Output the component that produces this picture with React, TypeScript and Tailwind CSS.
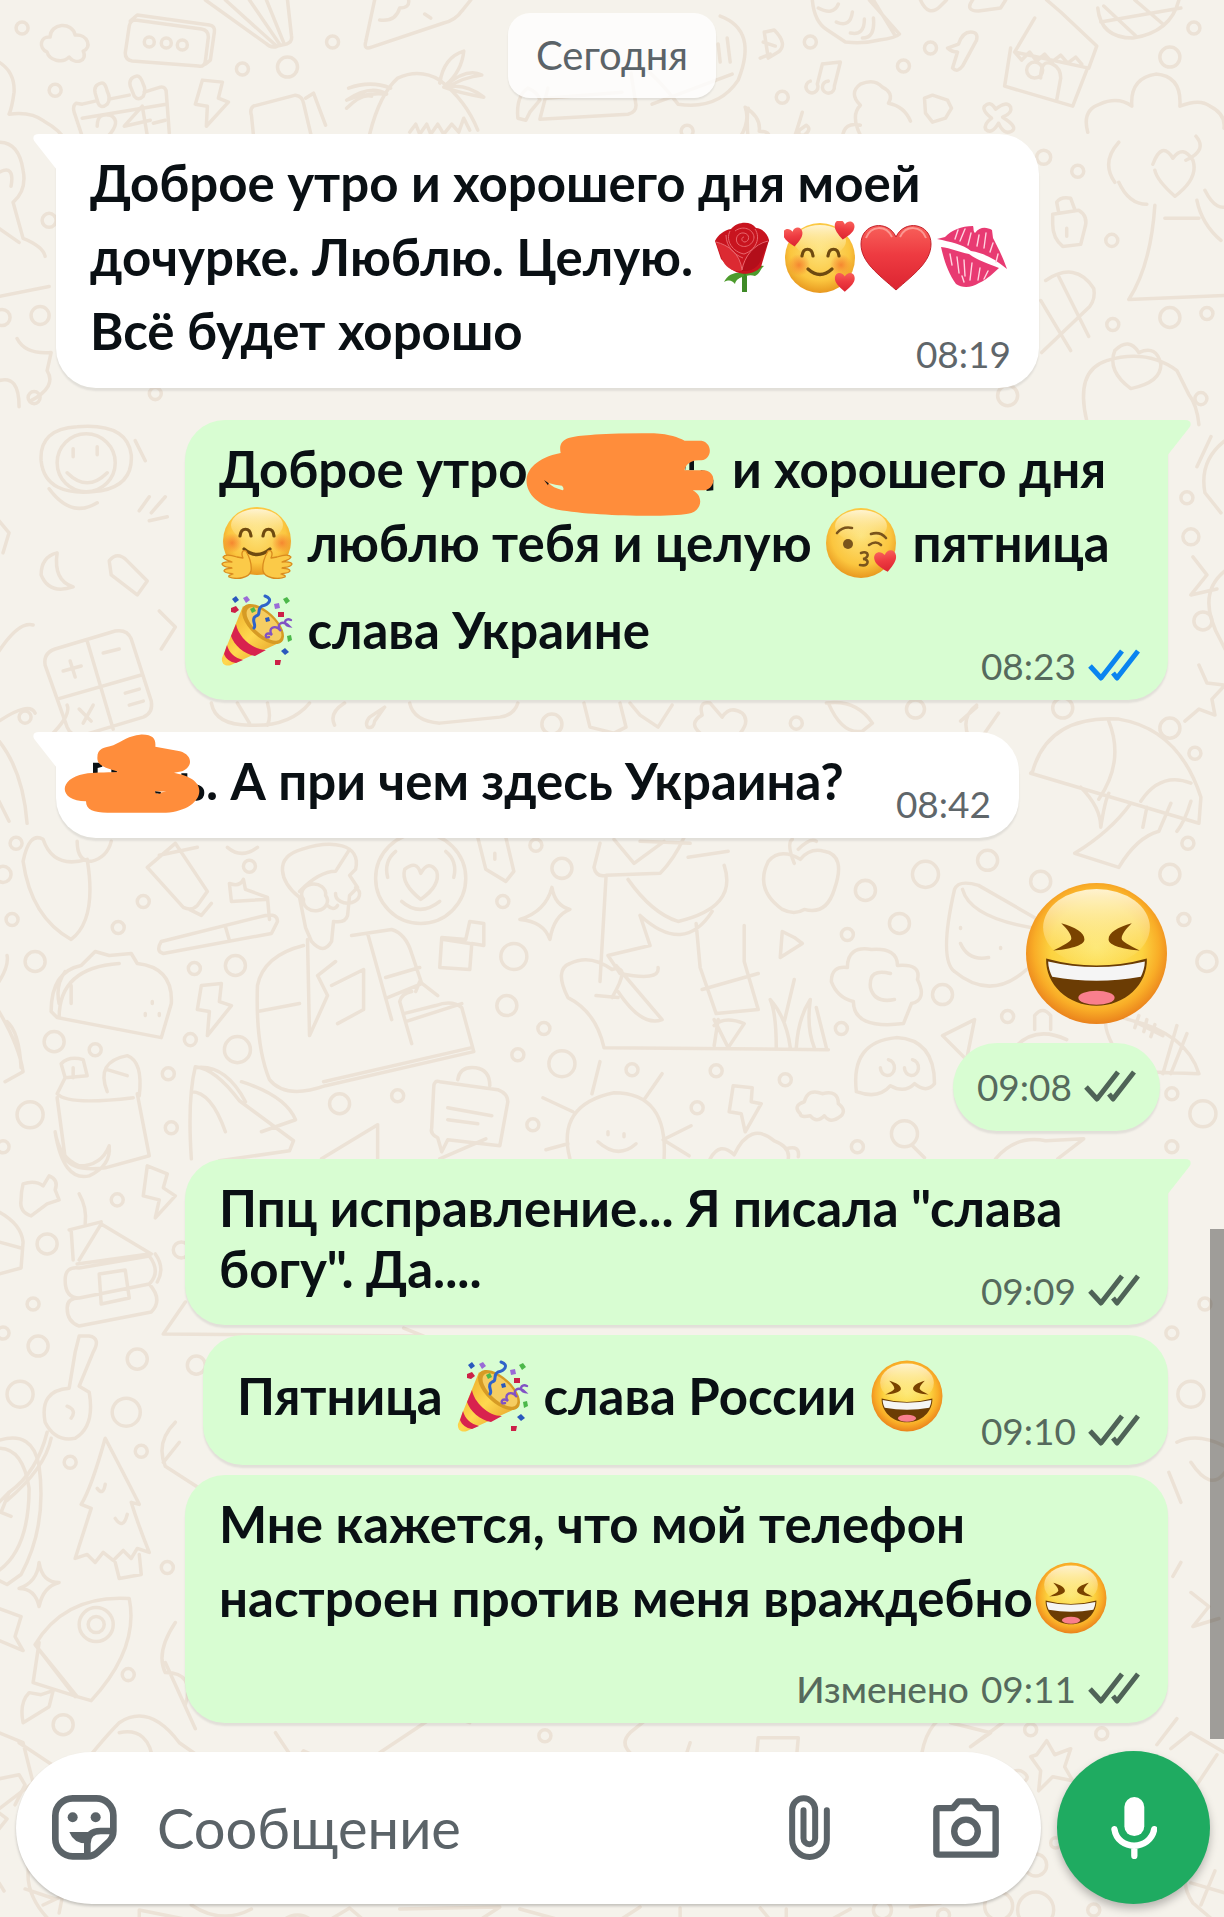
import type { ReactNode } from 'react'

type Message = {
  time: string
  body: ReactNode
  status?: 'read' | 'delivered'
  edited?: boolean
  tail?: boolean
  className: string
}

const doodleCircles = [
  [23, 28, 6], [333, 42, 6], [243, 69, 6], [288, 67, 10], [56, 90, 6], [810, 42, 6],
  [930, 48, 6], [903, 66, 6], [782, 97, 6], [1193, 28, 6], [1169, 57, 10], [1043, 157, 7],
  [1077, 171, 6], [1111, 240, 6], [1112, 324, 6], [1169, 317, 10], [1206, 313, 6],
  [41, 315, 9], [3, 317, 8], [50, 220, 7], [35, 397, 6], [156, 393, 6], [1007, 395, 10],
  [1200, 398, 6], [687, 131, 6], [26, 716, 6], [552, 723, 10], [796, 722, 6], [915, 708, 9],
  [1062, 707, 10], [1169, 727, 10], [1194, 752, 6], [4, 873, 8], [17, 842, 6], [250, 865, 6],
  [144, 900, 6], [13, 918, 6], [119, 926, 6], [36, 960, 10], [195, 967, 6], [236, 964, 10],
  [503, 900, 6], [562, 867, 10], [536, 844, 6], [514, 955, 13], [507, 1004, 10],
  [544, 1027, 6], [865, 889, 10], [899, 922, 10], [847, 933, 6], [925, 873, 13],
  [987, 859, 10], [1040, 880, 10], [1169, 873, 10], [1187, 842, 6], [1183, 918, 6],
  [1206, 960, 10], [942, 993, 10], [1007, 1015, 6], [841, 1027, 6], [191, 1038, 6],
  [238, 1048, 13], [55, 1040, 10], [96, 1048, 6], [169, 1072, 6], [172, 1126, 6],
  [340, 1102, 10], [398, 1094, 6], [518, 1053, 6], [562, 1062, 13], [632, 1068, 6],
  [716, 1069, 6], [785, 1078, 6], [697, 1106, 6], [533, 1123, 6], [31, 1113, 13],
  [857, 1145, 6], [904, 1132, 13], [1171, 1092, 6], [1202, 1112, 13], [1171, 1145, 6],
  [4, 1145, 6], [48, 1242, 10], [118, 1198, 6], [34, 1302, 6], [4, 1331, 6], [39, 1344, 10],
  [138, 1357, 10], [21, 1392, 13], [127, 1410, 14], [71, 1460, 6], [142, 1449, 6],
  [197, 1363, 9], [1204, 1302, 6], [1171, 1331, 6], [1190, 1392, 13], [182, 1248, 8],
  [168, 1565, 6], [129, 1672, 6], [64, 1722, 10], [545, 1733, 6], [1030, 1727, 6],
  [1101, 1731, 6], [1035, 1862, 11], [998, 1903, 14], [1035, 1907, 18], [1093, 1907, 6],
  [943, 1912, 6], [882, 1907, 9], [1055, 1840, 5], [150, 42, 5], [167, 43, 5], [183, 45, 5],
  [421, 877, 45], [1190, 536, 8], [1186, 497, 6], [1202, 620, 9], [87, 462, 29],
  [97, 1622, 17], [97, 1622, 8], [1034, 70, 8],
]

const doodlePaths = [
  // top strip
  'M48 52c-9-4-7-16 3-15 0-14 22-16 25-2 13-1 17 13 8 16 5 10-8 14-14 6-7 7-20 3-22-5z',
  'M136 20l66 9q7 1 7 8l-3 24q-1 6-7 5l-66-5q-7-1-7-8l4-27q1-6 6-6zM131 21l7-6 72 10q6 1 5 7l-4 28-5 4',
  'M206 0l60 43q6 6 12 3l9-2q6-2 5-8L288 0M226 0l50 45M250 0l30 44M267 0l17 42',
  'M375 0l-9 42q-2 8 6 5l72-24q12-3 18-12l9-11M380 20q16 2 20-12 10 0 9-8M425 14l6 4',
  'M83 104l-6-1q-4 3-2 9l10 30M83 104l13-3M110 99l20-4M145 92l16-5q6-1 6 6l3 40M83 118l84-14',
  'M102 83q-8 2-6 10l3 10q3 6 9 1 4-5 0-13-2-9-6-8zM137 76q-8 2-6 10l4 10q4 5 9 0 3-6 0-12-3-9-7-8z',
  'M98 126q0-14 13-11 12 6-3 22l-9 9 20-6M143 106l-18 20 26-6M143 106l6 35M154 123l12-3',
  'M203 80l-7 24 12 2-1 20 22-24-10-4 4-16zM254 106l42-11q7 1 8 8l8 34M254 106q-4 3-2 9l3 30',
  'M306 98l8-5 12 32M0 62q16 10 15 30-2 15-5 22 22-3 35 7 16 9 22 20',
  'M370 134q10-40 28-56 22-10 42 2 26 20 38 50M347 100q24-16 40-6-20-2-40 6zM349 88q22-8 42 0M440 83q4-26 24-32-2 20-18 34 22-18 36-10-18 2-34 12 18-4 36 10-24-4-40-10',
  'M372 96q-10-3-25 12M410 132l6-8 4 10 7-10 4 10 7-10 6 10 8-10 7 8 5-14 6 12',
  'M518 118q-2-22 10-30 10 4 12 12l-10 12-4 8zM548 88l-8 31 88-5q8-2 8-9l-5-32M546 98l76-6',
  'M640 64q18 14 38 40 40 6 60-24 20-50-18-64M718 44l2 18M727 38l3 24M652 104l80-30',
  'M812 0q2 22 15 30l18 12q18 2 34-2 16-2 20-6l-30-34M818 8q15 8 20-4M836 22q14 6 16-10M850 33q14 3 14-14M862 38q13 0 11-20M873 0l22 36',
  'M765 32l9-2q14 14 4 22l-10 6-4-26zM760 58l10-4M763 42l12 4',
  'M822 64l18-2-6 24M822 64l-5 20M834 86a6 6 0 1 1-6-5M817 84a6 6 0 1 1-7-3',
  'M958 44q4-12 12-12 8 0 6 8l-14 26q-5 7-10 2l5-16q-6 0-10-4z',
  'M924 98l8-3 15 5 4 8-6 10-13 4-7-9zM984 106q6-6 11 3 11-9 15-2 2 6-8 10 16 10 9 14-8 4-13-8-7 12-13 6-2-5 6-11-10-8-7-12z',
  'M860 135q-10-20 0-30-12-12 0-21 14-6 22 3 12 6 6 16 16 3 22 18M842 137q2-16 18-12M802 112q-6 20-8 25M799 130q-2 6 5 5 8-6 2-10z',
  'M740 137q10-16 5-30 16 10 14 24 10 0 10 6M748 140q-2-22 0-32',
  'M920 0q8 18 20 6l6-6M972 0q-8 11 6 11l22-3 5-8',
  'M1034 18l-20 34 74 16 8-22-36-34-14-12M1010 48l-6 38 68 20 14-36M1040 78q0-20 12-14 8 4 8 14l-4 22M1014 52l7 8 8-8 7 9 8-7 7 8 9-7 7 8 8-6 6 7',
  'M1097 8q3 30 35 30 38-6 46-38M1103 6l32 30M1134 0l28 24M1100 22l80-14',
  'M1087 132q-6-22 12-28 18-8 32 2-2-28 24-32 26 2 24 32 20-8 30 0 16 8 14 22M1118 142q-18 20-4 40M1185 160q22-10 10-24M1118 182q10 22 28 22M1204 190q12 24 26 14M1152 164q9-24 20-6 10-14 20 2 6 18-18 36-18-16-20-26',
  'M1154 205q-4 60-26 94l96-4M1164 218h34M1196 200q5 24 24 40',
  // strips beside the first bubbles
  'M1052 214l26-4q10 6 6 18l-4 16-18 2q-10-8-10-22zM1058 212l-2-10q4-6 14-4l4 11M1066 228v8',
  'M1045 280q30-20 48 8 2 10-4 18l-48 46M1058 276l30 60M1040 300l30 50',
  'M1086 420q-12-50 20-60 40-12 70 10l12 24q8 10 10 30M1130 388q-24-18-16-38 14-14 24 2 18-8 22 12 0 18-30 24z',
  'M0 142q20 0 24 28 4 20-10 32l10 36q20 8 22 18M0 172q16-8 12 14M0 228l20 14M0 296l50-10M18 338q8 16 34 14l-4 18q10 16-16 30M0 380q20-6 20 26',
  'M1210 436l-14 30M1224 440q-26 20-20 52l16 20M1192 556l14 18-16 20 26-6M1224 570q-30 24-4 70l4 8M1198 664l8 18 18 2-13 14 3 16-16-6-14 12',
  'M42 460q-2-32 36-34 50-4 54 28 2 30-30 36-56 8-60-30zM68 472q20 20 40 0M74 448v8M98 446v8M50 488q22 30 48 14',
  'M140 510l10-14M152 512l14-16M136 440l10 20',
  'M58 552q-16 4-16 22 8 20 32 12-20-6-16-34zM110 560q8-10 18 0l20 20-10 14-26-20z',
  'M46 664q-2-12 10-16l60-18q12-2 16 8l20 62q2 12-8 16l-60 18q-12 2-16-8zM58 698l84-24M88 640l26 88M64 670l18-5M71 660l5 16M104 652l16-4M80 708l12 12M94 704l-10 18M126 692l14-4M130 704l14-4',
  'M0 650q20-30 34-26M0 720q30-20 36-8M150 520l18-4M0 520l10 12-6 20M160 610l16 16-14 22',
  // row under the second bubble
  'M212 702q4 22 38 22 40 2 60-22M238 702l12 20M268 702q4 14 0 22M335 724q-6-12 10-22M370 716q-5 6-2 10 6 2 7-6l10-14zM410 702q4 18 30 20l60-6q14-2 18-14',
  'M584 702l6 24 24 6 12-6-6-24M630 702l10 12 18 12 14-22M700 732q-12-10 2-18-4-14 8-12l12 14q8-12 20-4 8 8-2 20M826 702q30-4 46 20l-10 8q-20 4-34-28M968 736q-8-20 8-32M984 732l14-20M960 720l16-14',
  // right of the short bubble
  'M1032 770q16-56 86-52 60 10 82 78l-2 26-168-50zM1108 720q16 40-10 78M1140 800q20-30 50-18M1080 786q20 20 20 40 4-26 8-34M1146 806l-4 20M1130 802q-20 28-56 50l44 14q18-30 40-36l12-28M1190 800q-6 20-14 30',
  'M0 740q24 30 28 82M0 800l10 20M52 734q20-20 16-30M24 860q6-30 20-22 10 30 44 20 10 60-16 80-40-22-48-78zM78 840q0 20 14 20 16-4 20-20',
  'M0 980q10-16 8-26M0 1010q20 34 24 60l-18 10M8 1020q12 10 14 46',
  'M176 842l-28 24 36 40q8 4 14-2l10-14zM160 854l38-8M190 908l12 6 10-12M228 846q14 12 30 0',
  'M232 900l-2-18q10 4 14-4l2 10 22 8 2 22M232 900l34-2M162 940l104-26q12-2 12 6l-6 12-108 20q-8-2-2-12zM226 925l4 14',
  'M300 896c-20-16-26-40 2-48 30-10 60-6 54 20l-6 6 8 12-8 8-2 20q-2 8-14 6l-2 20q-8 14-20 0l-6-14-6-30zM300 890q20-20 36-20l14-22M304 898a12 10 0 1 0 22-4 12 10 0 1 0-22 4zM336 892a12 9 0 1 0 20-6M328 904q6 6 10 0',
  'M304 944q-40 10-46 40-2 60 12 94 16 20 56 6l148-34-12-44q-10-8-26-2l-32 8M308 938l2 96 18-40-10-20 18-14M352 934l40-6q14 4 20 24l10 30-34 14M368 932l24 86M258 1010l42-8M324 1080l148-34M406 1020l56-18M412 1042l-12-42q2-8 12-10M416 990l4-10 18 14M332 984l32-16v40l-26 14M386 976l34-10',
  'M396 850q-12 10-8 26M446 850q12 10 8 26M402 900q18 16 38 0M421 898q-20-16-16-30 12-10 16 4 8-14 16-2 4 14-16 28z',
  'M478 836l8 32 20 12 8-10-8-34M495 852v6M484 922l-14-2-4 18-24-2-2 30 30 2 2-26 12 2zM444 938l26 4',
  'M552 886q3 18 18 22-16 6-20 30-6-18-30-20 26-8 32-32z',
  'M600 842l-6 24q2 10 12 8l54-2q14-14 24-36M606 876l-6 104M628 878q24 34 50 42 60-14 46-56M688 856l40-6M640 914l10 30-42 10 12 18q40 8 38-6M640 914q44 40 72-4M696 922l4 44 16 46 42-4-14-48V924M702 988l56-16M616 964l46 54q-20 8-44-28M596 994l22 2M604 1046q-8-36-36-50-14-28 2-34 20-10 42 6 20-6 0 28M714 1044l4-26M714 1018l14 28 16-24q-20-8-30 2M604 1046l224 2M776 1046q0-34-6-48 16 18 20 48M784 1020l10-42M796 1046q2-30 14-48-4 28 4 48M826 1046l-10-40',
  'M794 862q-8-20-2-24M800 858q-20-12-32 2-14 28 14 48 12 6 22 0 22 6 30-20 12-34-10-38-14-4-24 8zM798 848q12-12 18-8M614 838l20 24 30-22M640 840l50 2',
  'M954 888q4-10 24-4l66 38M954 888q-16 70 0 82 36 30 72-2M962 888q8 30 80 40M960 942q8 18 28 14M1000 946v1M960 926v1',
  'M782 930l-2 26 22-14-8-6zM831 980q0-16 16-14 0-22 24-18 26-2 26 16 24-2 20 14 10 20-6 24l-8 20q-50 6-50-22-16-4-22-20zM890 972q-22-6-20 14 4 16 24 12',
  'M52 1010q0-40 30-46l14-14 14 4 22-2 6 10q36 4 34 40l-10 34-104-20zM60 1016q0-50 60-54M72 984v18M153 1000v2M146 1012v2M160 1012v2M66 970q-10 14-6 32',
  'M202 984l-4 24 12 2-2 24 24-30-12-4 2-18z',
  'M856 1090q-6-50 40-54 38 2 38 46-8 10-20 0-10 10-24 2-12 14-34 6zM880 1066a7 8 0 1 0 8-8M904 1066a7 8 0 1 0 8-8',
  'M1112 1044q-20-40 16-26 58 14 70 54l-56-2M1176 1024l-14 48M1186 1032l-16 40M1134 1020l28 14M1138 1014l-4 12M1146 1018l-3 12M1154 1023l-4 12M942 1034l32-16-8 40zM1034 1028v-14q8-10 16 0v14M1016 1044q20-20 50-6',
  'M570 1157q-14-54 44-66 54 0 50 66M543 1096l30 14M600 1060l-8 32M662 1072l-18 26M691 1124l-28 14 26 16M546 1148l22-6M608 1130v3M624 1132v3M598 1140q20 18 38 2',
  'M458 1078q2-14 18-12 14 2 14 18M440 1080l58 8q10 4 10 12l-8 44-52-6-6 12-4-14q-8-4-6-10l2-40q0-8 6-6zM448 1106l44 8M448 1118l30 4',
  'M733 1084l-4 26 12 2 4 18 16-28-10-2 1-14zM800 1112q-8-8 4-12 4-14 18-8 16-4 16 10 10 8 0 14-8 6-14-2-8 8-14 0-10 2-10-2z',
  'M66 1076l-4-14q8-8 22-4l4 16zM66 1076l-8 16q10 12 76 4M58 1096l8 60q8 14 40 10l44-12-12-62M108 1090q-12-30 20-36 16 6 12 40M56 1130q8 50 34 44 22-10 20-30-8 20-30 20-20-8-24-34M74 1066v10M108 1068l20 6',
  'M192 1157q-4-60 4-92 20 2 44 34l54 40-4 10-70 10M196 1066q30-4 50 34M262 1130l34-12q-10-24-54-38M192 1090q20 0 34 40M322 1157l56-34v34M710 1157q10-18 24-4 16-34 40-14 16 6 14 18M786 1147q14-4 12 8M912 1144l12 12M995 1157q20-24 50-18l38-2-26 20M440 1157l46-20',
  // left strip by the lower bubbles
  'M24 1182q12-4 20 2l6-10q10 4 6 14l4 10-12 4-16 12q-12-4-10-16 0-8 2-16zM148 1164l-4 30 16 4-4 18 20-22-12-8 4-14zM80 1192q8 14 6 30',
  'M0 1210q22 12 24 30l-2 26-22 6M0 1240l22 6M70 1228l32-8M74 1258l-2-30M80 1258l22-36 50 30M78 1262l72-10M66 1278q0-14 14-12l70-12q12 16 0 28l-70 14q-14 0-14-18zM68 1306q0-10 12-10l70-14q14 16 2 28l-72 14q-12-4-12-18zM100 1272l26-4 4 28-28 6zM156 1252q10 14 2 28',
  'M186 1300l-22 32 260 2-20-8M80 1334l-4 16-6 36q-30 2-24 34 10 20 30 16 20-12 14-46l-10-6 14-34q8-14-4-16zM68 1404q10 4 4 12M48 1430q-10 40-38 60M52 1436q-6 30-44 62',
  'M0 1438q34-10 40 26 8 60-18 108l-14 10-8-4M0 1446q24 0 30 40 0 60-30 82M0 1500l10-10-8 20 10 4',
  'M106 1436q-14 50-24 66l10 4-16 50 12-4 8 8 8-10 10 8 10-10 8 8 6-10 12 4q-12-30-18-50l8 2q-10-20-34-66zM98 1486q6 8 8-4M116 1516q8 12 12-4M116 1560l4 16 22-4-2-20M176 1420q-20 20-10 44l34 22M180 1440l-16 20',
  'M40 1560q3 20 20 20-16 4-20 24-4-18-20-18 18-6 20-26zM1176 1440q20-10 48 4M1168 1470l12 30M1190 1460q20 30 34 10M1180 1560l-8 14M1190 1590l18 14-16 20 26-8',
  'M36 1642q30-50 94-46 10 50-38 102l-14-4zM40 1640l-6 40 44 14M36 1642l40 52M30 1690q-10 10-6 30l26-16 4-16-12 4zM0 1606l22 8-6 20 8 14-24-10M176 1620q-20 30-10 50 30 0 20 32M166 1660l30 66',
  'M0 1730l24 10 10 40-34 26M20 1740l60 40M70 1780q30-40 50-60 30-20 60 20l20 14M120 1730q30-6 34 30M276 1730l20 30 8-12 22 10M380 1750l60-40 30 10M630 1750q-10-10 0-20l20-16M690 1740l-6 18M758 1735h40l-2 22h-40z',
  'M920 1760q4-40 30-50M950 1720l40 10-20 14 40-30M1036 1752l10-14 8 14 16-6-6 18 8 14-20-4-14 14 2-20-10-14zM1156 1742l20-26M1170 1746l20-16 34 20M1196 1782l20-30',
  // around the composer
  'M0 1776l20-4 6 10-10 20M0 1810l8 6-8 10M0 1880l5 8M30 1860q-6 30 20 57M26 1886l30 10M66 1880l-6 30M44 1902l30-14M140 1917v-10l50 10M192 1902q30 20 60 4M284 1917q14-10 28 0M330 1917l20-12 14 12M400 1906l100-2-20 13M520 1906l40 11M640 1904l-20 13M680 1905v12M760 1905l10 12M786 1906v11M850 1906l-20 11M910 1904l30-4',
  'M1202 1840q-30 30-10 60l20 17M1214 1868l-14 34M1190 1880l34 10M1012 1780q-4-14 8-12 12 6 2 12l-10 8',
]

const Doodles = () => (
  <svg
    aria-hidden="true"
    className="absolute inset-0 size-full"
    viewBox="0 0 1224 1917"
    preserveAspectRatio="xMidYMin slice"
    fill="none"
    stroke="#ece2d6"
    strokeWidth="3.5"
    strokeLinecap="round"
    strokeLinejoin="round"
  >
    {doodleCircles.map(([cx, cy, r], index) => (
      <circle key={index} cx={cx} cy={cy} r={r} />
    ))}
    {doodlePaths.map((d, index) => (
      <path key={index} d={d} />
    ))}
  </svg>
)

// Gradients shared by every emoji on the page
const EmojiPaint = () => (
  <svg aria-hidden="true" className="absolute size-0">
    <defs>
      <radialGradient id="face" cx="0.5" cy="0.46" r="0.54">
        <stop offset="0" stopColor="#fde66a" />
        <stop offset="0.6" stopColor="#fcd340" />
        <stop offset="0.82" stopColor="#f9ad27" />
        <stop offset="1" stopColor="#ea821c" />
      </radialGradient>
      <radialGradient id="soft" cx="0.5" cy="0.4" r="0.6">
        <stop offset="0" stopColor="#fde27a" />
        <stop offset="0.7" stopColor="#fbc63f" />
        <stop offset="1" stopColor="#e8981f" />
      </radialGradient>
      <linearGradient id="shine" x1="0" y1="0" x2="0" y2="1">
        <stop offset="0" stopColor="#fff6d8" stopOpacity="0.95" />
        <stop offset="1" stopColor="#fff0a0" stopOpacity="0" />
      </linearGradient>
      <radialGradient id="blush">
        <stop offset="0" stopColor="#f4772b" stopOpacity="0.8" />
        <stop offset="1" stopColor="#f4772b" stopOpacity="0" />
      </radialGradient>
      <linearGradient id="heart" x1="0" y1="0" x2="0" y2="1">
        <stop offset="0" stopColor="#f8605a" />
        <stop offset="0.45" stopColor="#ee3b41" />
        <stop offset="1" stopColor="#dc2431" />
      </linearGradient>
      <linearGradient id="cone" x1="0" y1="0" x2="1" y2="1">
        <stop offset="0" stopColor="#e9a21f" />
        <stop offset="0.5" stopColor="#ffd84f" />
        <stop offset="1" stopColor="#dd8f1b" />
      </linearGradient>
    </defs>
  </svg>
)

const emojiClass = 'mx-0.5 inline-block size-18 align-[-17px]'
const HEART = 'M12 22C5 16 1 12 1 7c0-7 8-8 11-2 3-6 11-5 11 2 0 5-4 9-11 15z'

const Laughing = ({ className = emojiClass }: { className?: string }) => (
  <svg role="img" aria-label="😆" className={className} viewBox="-1 -1 142 142">
    <circle cx="70" cy="70" r="70" fill="url(#face)" />
    <ellipse cx="70" cy="44" rx="53" ry="38" fill="url(#shine)" />
    <g fill="#7a4300">
      <path d="M35 40c14 4 23 9 23 16 0 6-16 10-31 11 10-5 18-9 18-12 0-4-4-9-10-15z" />
      <path d="M105 40c-14 4-23 9-23 16 0 6 16 10 31 11-10-5-18-9-18-12 0-4 4-9 10-15z" />
    </g>
    <path d="M20 75q50 14 100 0c1 26-22 47-50 47S19 101 20 75z" fill="#6b3c04" />
    <path d="M22 78q48 11 96 0c0 6-2 11-4 15q-44 8-88 0c-2-4-4-9-4-15z" fill="#f5f5f5" />
    <ellipse cx="70" cy="114" rx="18" ry="7" fill="#f97f8d" />
  </svg>
)

const Rose = () => (
  <svg role="img" aria-label="🌹" className={emojiClass} viewBox="0 0 72 72">
    <path d="M34 48h5v23h-5z" fill="#3f8a27" />
    <path d="M35 52c-8-1-15 1-19 9 6-3 8-1 11 2 1-5 5-6 9-8zM38 52c4-5 10-9 18-7-4 3-4 8-9 10-3-1-6-1-9 0z" fill="#4d9b2d" />
    <path d="M23 8C30 0 43 0 48 7c6 0 12 6 13 12l-8 27c-8 9-24 9-32 0L13 38 7 20C10 14 16 9 23 8z" fill="#c8141f" />
    <path d="M8 21c10 3 24 9 26 29-10 1-17-4-20-12z" fill="#dc2a32" />
    <path d="M61 19c-12 2-22 12-27 31 12 1 18-6 20-14z" fill="#b30e1a" />
    <g fill="none" stroke="#e8666d" strokeWidth="1">
      <path d="M8 21c12 3 24 11 26 28M60 20C46 23 36 36 34 49M22 10c-5 10 3 21 14 23 12-4 17-16 11-25" />
      <path d="M27 10c8-6 18-2 19 6 0 7-9 13-16 7-4-5 0-12 6-11 6 1 6 8 1 9-4 0-4-5-1-5M18 14c0 12 9 20 17 23" />
    </g>
  </svg>
)

const Adoring = () => (
  <svg role="img" aria-label="🥰" className={emojiClass} viewBox="0 0 72 72">
    <circle cx="36" cy="37" r="35" fill="url(#soft)" />
    <ellipse cx="36" cy="20" rx="26" ry="16" fill="url(#shine)" />
    <circle cx="15" cy="44" r="11" fill="url(#blush)" />
    <circle cx="57" cy="44" r="11" fill="url(#blush)" />
    <path d="M18 35c1-9 10-9 11 0M44 35c1-9 10-9 11 0M24 48q12 11 24 0" fill="none" stroke="#6e4a10" strokeWidth="3.2" strokeLinecap="round" />
    <g fill="url(#heart)">
      <path transform="translate(-1 6) rotate(-8 12 12)scale(.88)" d={HEART} />
      <path transform="translate(49 -1) rotate(8 12 12)scale(.9)" d={HEART} />
      <path transform="translate(50 51)scale(.9)" d={HEART} />
    </g>
  </svg>
)

const RedHeart = () => (
  <svg role="img" aria-label="❤️" className={emojiClass} viewBox="0 0 72 72">
    <path d="M36 69C18 53 1 41 1 23 1 2 28-2 36 16 44-2 71 2 71 23c0 18-17 30-35 46z" fill="url(#heart)" stroke="#c2202a" strokeWidth="1" />
    <path d="M6 17C11 4 26 4 32 16M40 16C46 4 61 4 66 17" fill="none" stroke="#ffb3ac" strokeWidth="2" opacity="0.7" />
  </svg>
)

const Kiss = () => (
  <svg role="img" aria-label="💋" className={emojiClass} viewBox="0 0 72 72">
    <g fill="#e83a72">
      <path d="M1 18l8-2C16 9 25 5 37 5c1 3 0 5 2 7 5-7 12-6 17-3l1 8c5 10 9 17 14 31-12-10-23-16-36-18-9-7-20-9-34-12z" />
      <path d="M5 26c10 1 18 5 28 7 10 7 18 9 30 14-6 5-11 11-20 15-8 5-17 5-23 1-8-11-12-24-15-37z" />
    </g>
    <path d="M22 9l-3 9M29 8l-5 12M35 12l-3 12M43 14l-2 11M50 12l-2 15M57 22l-3 9M14 33l2 11M21 36l2 16M28 39l1 16M36 42l-2 17M44 47l-2 12M52 50l-4 8M26 55l2 6M62 33l-2 8" fill="none" stroke="#ffd3e0" strokeWidth="1.4" strokeLinecap="round" />
  </svg>
)

const Hugging = () => (
  <svg role="img" aria-label="🤗" className={emojiClass} viewBox="0 0 72 72">
    <circle cx="36" cy="34" r="34" fill="url(#soft)" />
    <ellipse cx="36" cy="18" rx="26" ry="16" fill="url(#shine)" />
    <circle cx="11" cy="36" r="10" fill="url(#blush)" />
    <circle cx="61" cy="36" r="10" fill="url(#blush)" />
    <path d="M19 29c1-9 10-9 11 0M42 29c1-9 10-9 11 0M23 42q13 11 26 0" fill="none" stroke="#6e4a10" strokeWidth="3.2" strokeLinecap="round" />
    <g fill="#fbca48" stroke="#d98b1e" strokeWidth="1.3" strokeLinejoin="round">
      <path d="M30 64c1-7-1-13-5-20-4-2-5 3-3 7l-6-1C10 48 4 47 2 50c2 4 6 3 9 5-4 0-9-1-10 2 2 4 7 3 10 4-4 1-8 0-8 3 2 3 7 2 9 3-2 1-5 1-4 3 8 3 20 1 22-6z" />
      <path d="M42 64c-1-7 1-13 5-20 4-2 5 3 3 7l6-1c6-2 12-3 14 0-2 4-6 3-9 5 4 0 9-1 10 2-2 4-7 3-10 4 4 1 8 0 8 3-2 3-7 2-9 3 2 1 5 1 4 3-8 3-20 1-22-6z" />
    </g>
  </svg>
)

const BlowingKiss = () => (
  <svg role="img" aria-label="😘" className={emojiClass} viewBox="0 0 72 72">
    <circle cx="35" cy="36" r="35" fill="url(#soft)" />
    <ellipse cx="35" cy="19" rx="26" ry="16" fill="url(#shine)" />
    <circle cx="22" cy="37" r="5" fill="#7a541c" />
    <path d="M11 26q6-7 15-5M45 27q9-3 15 4M43 38q7-5 12 0M35 46c8-3 9 5 2 6 7 0 6 8-3 6" fill="none" stroke="#7a541c" strokeWidth="2.6" strokeLinecap="round" />
    <path transform="translate(48 43)rotate(-10 12 12)" d={HEART} fill="url(#heart)" />
  </svg>
)

const Party = () => (
  <svg role="img" aria-label="🎉" className={emojiClass} viewBox="0 0 72 72">
    <path d="M22 12L1 64c-1 6 4 9 9 7l50-23z" fill="url(#cone)" />
    <path d="M15 30l-5 12c3 9 13 18 24 20l11-6C31 56 17 42 15 30zM6 51l-3 9c2 5 6 8 12 9l7-3C14 64 8 59 6 51z" fill="#d8224e" />
    <ellipse cx="42" cy="30" rx="26" ry="13" transform="rotate(43 42 30)" fill="#d69b25" />
    <ellipse cx="43" cy="30" rx="22" ry="10" transform="rotate(43 43 30)" fill="#f5cd62" />
    <g fill="none" strokeWidth="3" strokeLinecap="round">
      <path d="M44 2c9 3 3 9-3 10-6 3 0 9-6 10-6 3 1 9-2 12" stroke="#2f63c9" />
      <path d="M70 26c-7-3-8 5-2 6-7-7-14-1-8 5-6-8-14-2-9 4-6-5-9 4-3 2" stroke="#8152c4" strokeWidth="2.4" />
    </g>
    <path d="M11 5l4-3 3 4-4 3zM44 24l4-1 1 4-4 1zM60 57l4-3 4 4-4 3z" fill="#2a58bd" />
    <path d="M22 4l4-2 3 4-4 3zM53 10l5-1 1 5-5 1z" fill="#9a6bd6" />
    <path d="M10 14l5-2 3 4-4 3-4-1zM57 18h6v5h-6zM54 66h6l-1 5h-5z" fill="#cc2047" />
    <path d="M62 5l4-2 3 4-4 3zM66 42l4-1 1 5-4 2zM29 15l4-2 2 4-4 2z" fill="#4cb84a" />
  </svg>
)

const Ticks = ({ status }: { status: 'read' | 'delivered' }) => (
  <svg
    role="img"
    aria-label={status === 'read' ? 'Прочитано' : 'Доставлено'}
    className={`h-[34px] w-[52px] ${status === 'read' ? 'text-[#0a84f0]' : 'text-[#4f6357]'}`}
    viewBox="0 0 52 34"
    fill="none"
    stroke="currentColor"
    strokeWidth="5"
    strokeLinejoin="round"
  >
    <path d="M2 17l11 12L34 2M25 24l4 5L50 2" />
  </svg>
)

const Meta = ({ time, status, edited, incoming }: { time: string; status?: Message['status']; edited?: boolean; incoming?: boolean }) => (
  <span
    className={`flex items-center gap-3 text-[37px]/[44px] whitespace-nowrap ${incoming ? 'text-[#5f666a]' : 'text-[#566a5d]'}`}
  >
    {edited && <span className="font-medium">Изменено</span>}
    <time>{time}</time>
    {status && <Ticks status={status} />}
  </span>
)

const Bubble = ({ message, incoming }: { message: Message; incoming?: boolean }) => (
  <article
    className={`relative rounded-[40px] pt-3 pb-5 pl-[34px] shadow-[0_3px_2px_rgba(0,0,0,0.08)] ${message.className} ${
      incoming ? 'self-start bg-white' : 'self-end bg-[#d8fdd2]'
    } ${message.tail ? (incoming ? 'rounded-tl-none' : 'rounded-tr-none') : ''}`}
  >
    {message.tail && (
      <svg
        aria-hidden="true"
        className={`absolute top-0 h-9 w-6 ${incoming ? '-left-[23px] fill-white' : '-right-[23px] -scale-x-100 fill-[#d8fdd2]'}`}
        viewBox="0 0 24 36"
      >
        <path d="M24 0H6C0 0-1 4 2 8l22 28z" />
      </svg>
    )}
    <p className="text-[51px]/[74px] font-bold whitespace-nowrap text-[#0a1014]">{message.body}</p>
    <div className="absolute right-7 bottom-3">
      <Meta time={message.time} status={message.status} edited={message.edited} incoming={incoming} />
    </div>
  </article>
)

const NameScribble = () => (
  <span className="relative inline-block w-[192px]">
    <svg aria-hidden="true" className="absolute -top-[55px] -left-1 h-[84px] w-[192px]" viewBox="0 0 576 252">
      <path d="M484 82h26v30h-26zM530 112q32 0 38 30v30l-20 2z" fill="#0a1014" />
      <path d="M488 84h8v28h-12z" fill="#d8fdd2" />
      <path d="M110 60C100 14 140 10 200 6Q260 0 390 1c50 3 70 12 92 22h50c34 6 34 54 0 59-38-4-50 20-50 30h60c34 4 36 52 0 60h-36c34 16 30 64-14 70-70 12-290 6-390-12C-10 210-40 90 110 60z" fill="#ff8d3b" />
      <path d="M74 150q20 6 40 8 8 10 2 14-30-8-42-22z" fill="#d8fdd2" />
      <path d="M60 141l14 10-2 6z" fill="#0a1014" />
    </svg>
  </span>
)

const ReplyScribble = () => (
  <span className="relative inline-block w-[116px]">
    <svg aria-hidden="true" className="absolute -top-[66px] -left-[26px] h-[80px] w-[142px]" viewBox="0 0 426 240">
      <path d="M87 86h28v12l-14 4v18H87zM142 102h18v14h-18zM352 118h18v20h-18zM390 150q36 4 30 34-6 18-26 16z" fill="#0a1014" />
      <path d="M100 72c0-30 20-30 48-38 24-12 50-30 80-32 40-2 48 14 46 36l74 14c40 12 38 48 6 60l-24 4c30 6 76 20 76 54s-40 62-100 66H130c-40 0-64-8-64-34C-18 202-18 134 60 120c30-6 60-4 104-6-34-12-64-16-64-42z" fill="#ff8d3b" />
      <path d="M273 172q20-1 34 0-14 4-28 8z" fill="#ffd9b9" />
      <path d="M273 172l18 2-2 5-14-1z" fill="#0a1014" />
    </svg>
  </span>
)

const firstMessage: Message = {
  time: '08:19',
  tail: true,
  className: 'mt-9 w-[983px]',
  body: (
    <>
      Доброе утро и хорошего дня моей
      <br />
      дочурке. Люблю. Целую. <Rose />
      <Adoring />
      <RedHeart />
      <Kiss />
      <br />
      Всё будет хорошо
    </>
  ),
}

const secondMessage: Message = {
  time: '08:23',
  status: 'read',
  tail: true,
  className: 'mt-8 w-[983px]',
  body: (
    <>
      Доброе утро
      <NameScribble /> и хорошего дня
      <br />
      <Hugging /> люблю тебя и целую <BlowingKiss /> пятница
      <span className="block leading-[100px]">
        <Party /> слава Украине
      </span>
    </>
  ),
}

const thirdMessage: Message = {
  time: '08:42',
  tail: true,
  className: 'mt-8 w-[963px]',
  body: (
    <>
      <ReplyScribble />. А при чем здесь Украина?
    </>
  ),
}

const lastMessages: Message[] = [
  {
    time: '09:09',
    status: 'delivered',
    tail: true,
    className: 'mt-7 w-[983px]',
    body: (
      <>
        Ппц исправление... Я писала "слава
        <span className="mb-3 block leading-12">богу". Да....</span>
      </>
    ),
  },
  {
    time: '09:10',
    status: 'delivered',
    className: 'mt-2.5 w-[965px]',
    body: (
      <span className="block leading-[98px]">
        Пятница <Party /> слава России <Laughing />
      </span>
    ),
  },
  {
    time: '09:11',
    status: 'delivered',
    edited: true,
    className: 'mt-2.5 w-[983px]',
    body: (
      <span className="mb-17 block">
        Мне кажется, что мой телефон
        <br />
        настроен против меня враждебно
        <Laughing />
      </span>
    ),
  },
]

const Composer = () => (
  <form className="flex items-center gap-4 pt-7 pr-3.5 pb-4 pl-4" onSubmit={(e) => e.preventDefault()}>
    <div className="flex h-[152px] min-w-0 flex-1 items-center rounded-full bg-white pr-[42px] pl-9 text-[#5b6368] shadow-[0_2px_3px_rgba(0,0,0,0.2)]">
      <button type="button" aria-label="Стикеры" className="shrink-0">
        <svg className="size-[65px]" viewBox="0 0 195 195" fill="none" stroke="currentColor" strokeWidth="20">
          <path d="M62 10h71a51 51 0 0 1 51 51v47q0 19-14 33l-32 30q-14 13-33 13H62a52 52 0 0 1-52-52V62a52 52 0 0 1 52-52z" />
          <path d="M184 108h-38q-40 0-40 38v38" />
          <path d="M52 111h88q-30 6-34 34-40 2-54-34z" fill="currentColor" stroke="none" />
          <circle cx="62" cy="67" r="15" fill="currentColor" stroke="none" />
          <circle cx="131" cy="67" r="15" fill="currentColor" stroke="none" />
        </svg>
      </button>
      <input
        type="text"
        aria-label="Сообщение"
        placeholder="Сообщение"
        className="ml-10 h-20 min-w-0 flex-1 text-[56px] outline-none placeholder:text-[#5b6368]"
      />
      <button type="button" aria-label="Прикрепить файл" className="shrink-0">
        <svg className="h-[65px] w-[41px]" viewBox="0 0 122 195" fill="none" stroke="currentColor" strokeWidth="18" strokeLinecap="round">
          <path d="M113 46v88a52 52 0 0 1-104 0V44a34 34 0 0 1 69 0v86a17 17 0 0 1-35 0V46" />
        </svg>
      </button>
      <button type="button" aria-label="Камера" className="ml-[103px] shrink-0">
        <svg className="h-[60px] w-[66px]" viewBox="0 0 196 178" fill="none" stroke="currentColor" strokeWidth="19" strokeLinejoin="round">
          <path d="M18 30h41l17-20h44l17 20h41q8 0 8 8v122q0 8-8 8H18q-8 0-8-8V38q0-8 8-8z" />
          <circle cx="98" cy="99" r="35" />
        </svg>
      </button>
    </div>
    <button
      type="button"
      aria-label="Голосовое сообщение"
      className="flex size-[153px] shrink-0 items-center justify-center rounded-full bg-[#1fab61] text-white shadow-[0_5px_8px_rgba(0,0,0,0.25)]"
    >
      <svg className="h-[62px] w-[46px]" viewBox="0 0 138 187" fill="none" stroke="currentColor" strokeWidth="19" strokeLinecap="round">
        <rect x="40" y="0" width="60" height="118" rx="30" fill="currentColor" stroke="none" />
        <path d="M10 97c10 66 108 66 120 0M70 148v30" />
      </svg>
    </button>
  </form>
)

export default function App() {
  return (
    <div className="relative flex min-h-screen flex-col overflow-hidden bg-[#f5f2eb] font-['Lato','Inter',sans-serif]">
      <Doodles />
      <EmojiPaint />

      <main className="relative flex flex-1 flex-col px-14 pt-[13px]">
        <div className="self-center rounded-[22px] bg-white/80 px-7 py-5 text-[40px]/[45px] text-[#5b6368] shadow-[0_2px_2px_rgba(0,0,0,0.08)]">
          Сегодня
        </div>

        <Bubble message={firstMessage} incoming />
        <Bubble message={secondMessage} />
        <Bubble message={thirdMessage} incoming />

        <div className="mt-11 flex flex-col items-end gap-[18px]">
          <Laughing className="size-[143px]" />
          <div className="mr-2 rounded-full bg-[#d8fdd2] px-6 py-[22px] shadow-[0_3px_2px_rgba(0,0,0,0.08)]">
            <Meta time="09:08" status="delivered" />
          </div>
        </div>

        {lastMessages.map((message) => (
          <Bubble key={message.time} message={message} />
        ))}
      </main>

      <div className="relative">
        <Composer />
      </div>

      <div aria-hidden="true" className="absolute top-[64%] right-0 bottom-[181px] w-3.5 bg-black/35" />
    </div>
  )
}
